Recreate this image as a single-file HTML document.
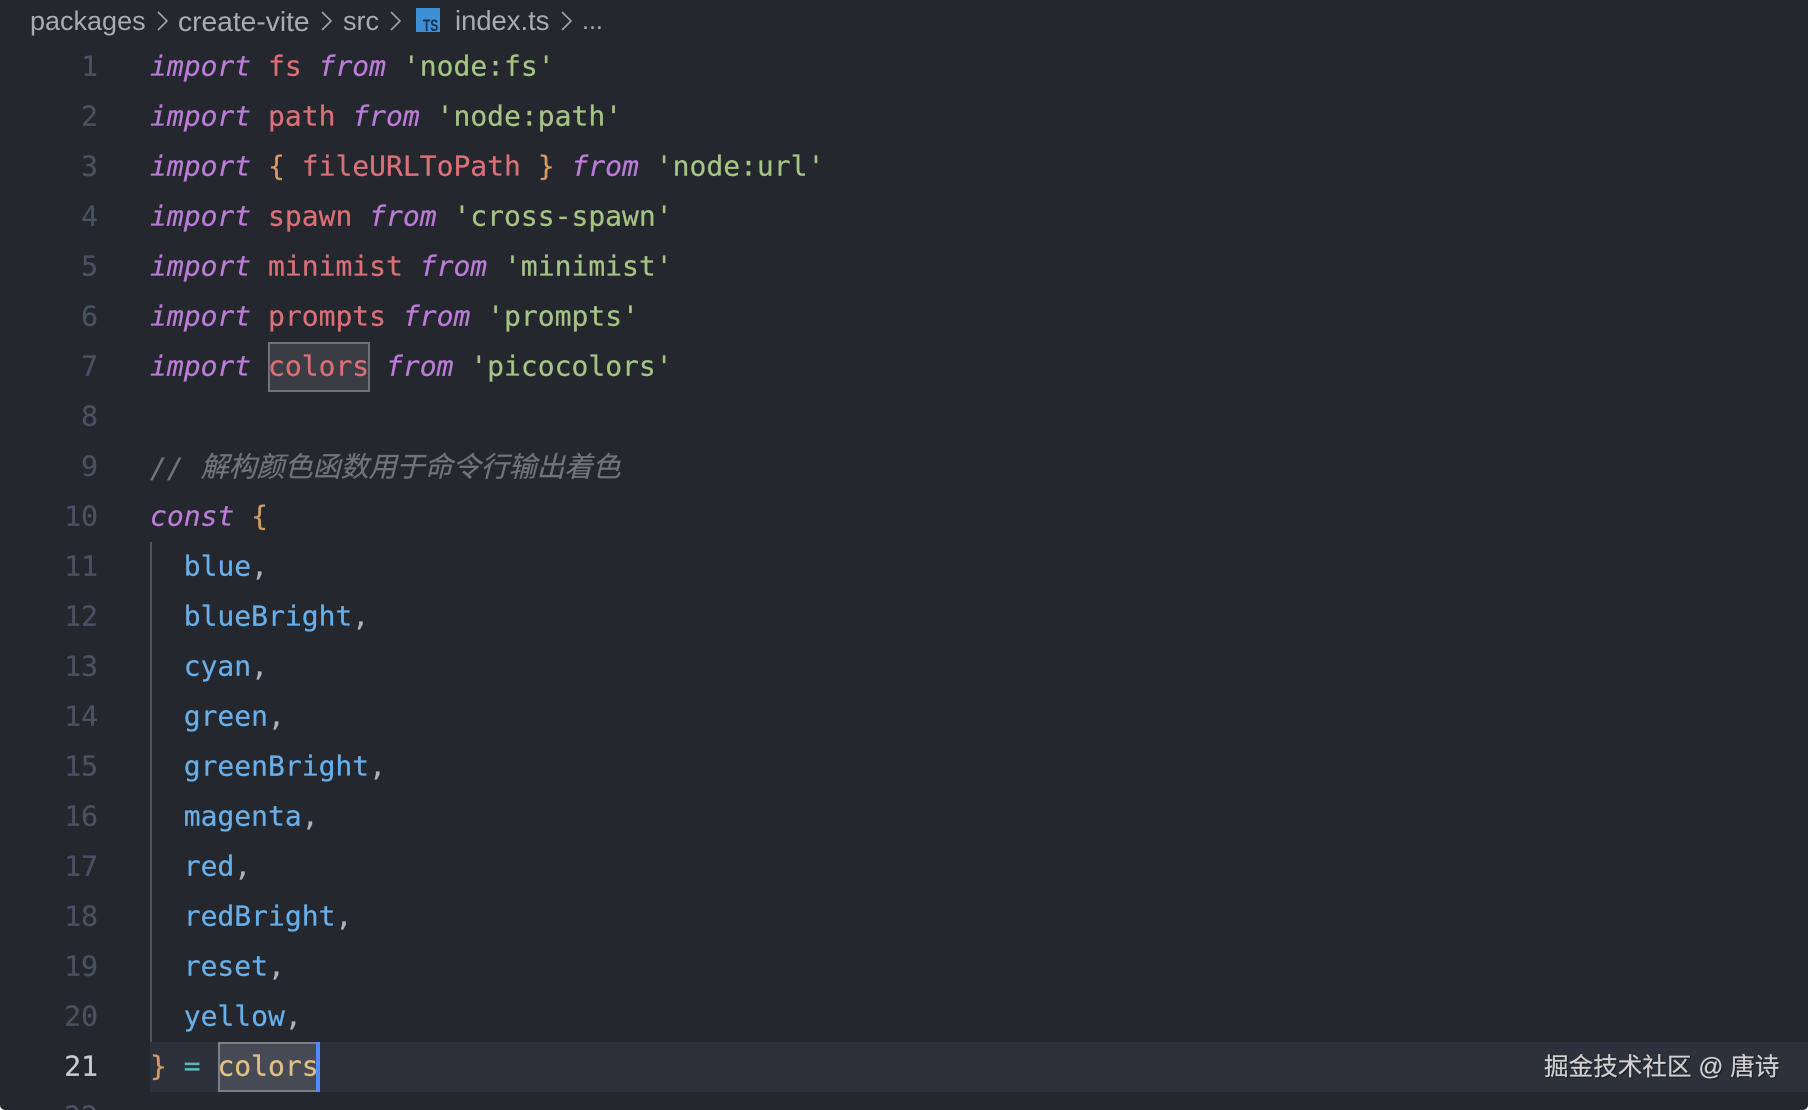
<!DOCTYPE html>
<html lang="zh">
<head>
<meta charset="utf-8">
<style>
html,body{margin:0;padding:0;background:#fff;}
body{width:1808px;height:1110px;overflow:hidden;position:relative;}
#e{position:absolute;left:0;top:0;width:1808px;height:1110px;background:#24272d;overflow:hidden;border-radius:0 0 5px 5px;}
.a{position:absolute;white-space:pre;}
.bc{font:27px/36px "Liberation Sans",sans-serif;color:#a8abb1;top:3px;filter:blur(.3px);}
.c{font-family:"DejaVu Sans Mono","Noto Sans CJK SC",monospace;font-size:28px;line-height:50px;height:50px;left:150px;color:#abb2bf;-webkit-text-stroke:.25px currentColor;filter:blur(.35px);transform:translateY(.4px);}
.n{font-family:"DejaVu Sans Mono",monospace;font-size:28px;line-height:50px;height:50px;left:38px;width:60px;text-align:right;color:#495162;-webkit-text-stroke:.25px currentColor;filter:blur(.35px);transform:translateY(.4px);}
.k{color:#ba7cd7;font-style:italic}
.v{color:#da7077}
.s{color:#a5c383}
.b{color:#d19a66}
.p{color:#68afea}
.q{color:#62b3b8}
.y{color:#e3c081}
.m{color:#6f737a;font-style:italic}
.cjk{font-family:"Noto Sans CJK SC",sans-serif;position:relative;top:-1px;}
</style>
</head>
<body>
<div id="e">
  <div class="a" style="left:150px;top:1042px;width:1658px;height:50px;background:#2d313b"></div>
  <div class="a" style="left:150px;top:542px;width:2px;height:500px;background:#52555b"></div>
  <div class="a" style="left:268px;top:342px;width:98px;height:46px;background:#3a3d44;border:2px solid #6f7276"></div>
  <div class="a" style="left:218px;top:1042px;width:98px;height:46px;background:#454a54;border:2px solid #7b7f88"></div>
  <div class="a" style="left:316px;top:1042px;width:4px;height:50px;background:#528bff"></div>

  <div class="a bc" style="left:30px">packages</div>
  <div class="a bc" style="left:178px;font-size:28.2px">create-vite</div>
  <div class="a bc" style="left:343px">src</div>
  <div class="a bc" style="left:455px;font-size:27.4px">index.ts</div>
  <div class="a bc" style="left:582px;font-size:25px">...</div>
  <svg class="a" style="left:0;top:0" width="620" height="40" fill="none" stroke="#a0a3a9" stroke-width="1.6">
    <path d="M158 12l9 9-9 9M322 12l9 9-9 9M391 12l9 9-9 9M562 12l9 9-9 9"/>
  </svg>
  <div class="a" style="left:416px;top:8px;width:24px;height:24px;background:#3d8fd6"></div>
  <div class="a" style="left:423px;top:18px;font:bold 17px/15px 'Liberation Sans',sans-serif;color:#17304a;transform:scaleX(.7);transform-origin:0 0">TS</div>

  <div class="a n" style="top:41px">1</div>
  <div class="a n" style="top:91px">2</div>
  <div class="a n" style="top:141px">3</div>
  <div class="a n" style="top:191px">4</div>
  <div class="a n" style="top:241px">5</div>
  <div class="a n" style="top:291px">6</div>
  <div class="a n" style="top:341px">7</div>
  <div class="a n" style="top:391px">8</div>
  <div class="a n" style="top:441px">9</div>
  <div class="a n" style="top:491px">10</div>
  <div class="a n" style="top:541px">11</div>
  <div class="a n" style="top:591px">12</div>
  <div class="a n" style="top:641px">13</div>
  <div class="a n" style="top:691px">14</div>
  <div class="a n" style="top:741px">15</div>
  <div class="a n" style="top:791px">16</div>
  <div class="a n" style="top:841px">17</div>
  <div class="a n" style="top:891px">18</div>
  <div class="a n" style="top:941px">19</div>
  <div class="a n" style="top:991px">20</div>
  <div class="a n" style="top:1041px;color:#c8cbd0">21</div>
  <div class="a n" style="top:1091px">22</div>

  <div class="a c" style="top:41px"><span class="k">import</span> <span class="v">fs</span> <span class="k">from</span> <span class="s">'node:fs'</span></div>
  <div class="a c" style="top:91px"><span class="k">import</span> <span class="v">path</span> <span class="k">from</span> <span class="s">'node:path'</span></div>
  <div class="a c" style="top:141px"><span class="k">import</span> <span class="b">{</span> <span class="v">fileURLToPath</span> <span class="b">}</span> <span class="k">from</span> <span class="s">'node:url'</span></div>
  <div class="a c" style="top:191px"><span class="k">import</span> <span class="v">spawn</span> <span class="k">from</span> <span class="s">'cross-spawn'</span></div>
  <div class="a c" style="top:241px"><span class="k">import</span> <span class="v">minimist</span> <span class="k">from</span> <span class="s">'minimist'</span></div>
  <div class="a c" style="top:291px"><span class="k">import</span> <span class="v">prompts</span> <span class="k">from</span> <span class="s">'prompts'</span></div>
  <div class="a c" style="top:341px"><span class="k">import</span> <span class="v">colors</span> <span class="k">from</span> <span class="s">'picocolors'</span></div>
  <div class="a c" style="top:441px"><span class="m">// <span class="cjk">解构颜色函数用于命令行输出着色</span></span></div>
  <div class="a c" style="top:491px"><span class="k">const</span> <span class="b">{</span></div>
  <div class="a c" style="top:541px">  <span class="p">blue</span>,</div>
  <div class="a c" style="top:591px">  <span class="p">blueBright</span>,</div>
  <div class="a c" style="top:641px">  <span class="p">cyan</span>,</div>
  <div class="a c" style="top:691px">  <span class="p">green</span>,</div>
  <div class="a c" style="top:741px">  <span class="p">greenBright</span>,</div>
  <div class="a c" style="top:791px">  <span class="p">magenta</span>,</div>
  <div class="a c" style="top:841px">  <span class="p">red</span>,</div>
  <div class="a c" style="top:891px">  <span class="p">redBright</span>,</div>
  <div class="a c" style="top:941px">  <span class="p">reset</span>,</div>
  <div class="a c" style="top:991px">  <span class="p">yellow</span>,</div>
  <div class="a c" style="top:1041px"><span class="b">}</span> <span class="q">=</span> <span class="y">colors</span></div>

  <div class="a" style="left:1544px;top:1051px;font:24.6px/34px 'Liberation Sans','Noto Sans CJK SC',sans-serif;color:#d0d0d0;-webkit-text-stroke:.2px #d0d0d0;text-shadow:1px 1px 1px #16181c">掘金技术社区 @ 唐诗</div>
</div>
</body>
</html>
